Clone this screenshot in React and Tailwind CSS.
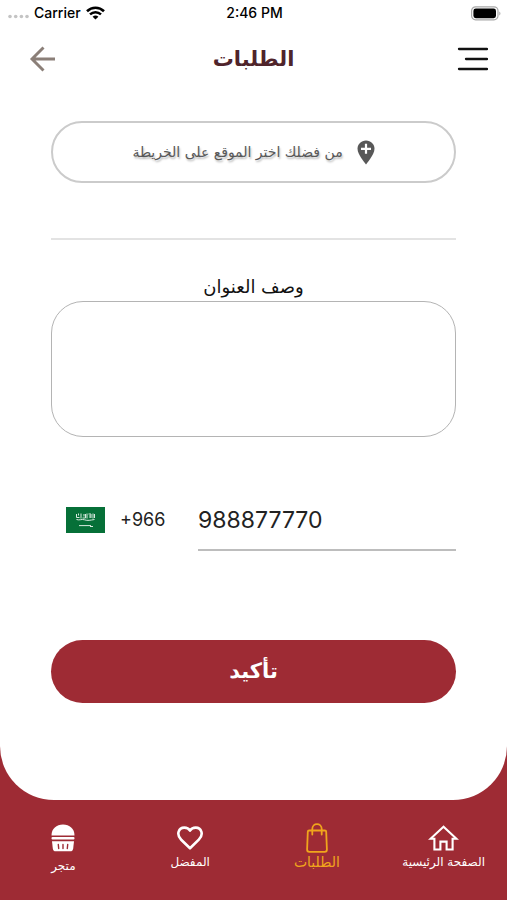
import React from "react";

function WifiIcon() {
  return (
    <svg width="19" height="14" viewBox="0 0 19 14" fill="none" stroke="#000" aria-hidden="true">
      <path d="M1 5.2C5.8 0.6 13.2 0.6 18 5.2" strokeWidth="2.6" />
      <path d="M4 8.4c3.2-3 7.8-3 11 0" strokeWidth="2.5" />
      <path d="M9.500 13.600L6.600 10.700c1.700-1.500 4.100-1.500 5.800 0z" fill="#000" stroke="none" />
    </svg>
  );
}

function StatusBar() {
  return (
    <div className="grid h-[26px] grid-cols-3 items-center pr-[6px] pl-2 font-['Inter','Liberation_Sans',sans-serif] text-sm font-medium text-black">
      <div className="flex items-center gap-[5px]">
        <svg width="21" height="14" viewBox="0 0 21 14" fill="#c4c4c4" aria-hidden="true">
          <circle cx="2" cy="10.500" r="1.800" />
          <circle cx="7.700" cy="10.500" r="1.800" />
          <circle cx="13.400" cy="10.500" r="1.800" />
          <circle cx="19" cy="10.500" r="1.800" />
        </svg>
        <span>Carrier</span>
        <WifiIcon />
      </div>
      <div className="text-center">2:46 PM</div>
      <svg className="justify-self-end" width="30" height="15" viewBox="0 0 30 15" aria-hidden="true">
        <rect x="0.600" y="0.800" width="26.400" height="13" rx="4" fill="#fff" stroke="#a8a8a8" strokeWidth="1.200" />
        <rect x="2.400" y="2.600" width="22.600" height="9.600" rx="2.400" fill="#000" />
        <path d="M28.300 5.500c1.500.8 1.500 3.200 0 4z" fill="#a8a8a8" />
      </svg>
    </div>
  );
}

function Header() {
  return (
    <header className="flex h-[66px] items-center justify-between px-[19px]">
      <button type="button" aria-label="رجوع" className="flex w-10 justify-start pl-[10px]">
        <svg width="27" height="26" viewBox="0 0 27 26" fill="none" stroke="#8b7f78" strokeWidth="2.900" aria-hidden="true">
          <path d="M26 13H3.500M14.500 1.500L3 13l11.500 11.500" />
        </svg>
      </button>
      <h1 className="text-[21px] leading-8 font-bold text-[#4f242b]">الطلبات</h1>
      <button type="button" aria-label="القائمة" className="flex w-10 justify-end">
        <svg width="31" height="24" viewBox="0 0 31 24" fill="none" stroke="#111" strokeWidth="2.300" strokeLinecap="round" aria-hidden="true">
          <path d="M2 2h28M9 12h21M2 22h28" />
        </svg>
      </button>
    </header>
  );
}

function PinIcon() {
  return (
    <svg width="18" height="25" viewBox="0 0 18 25" aria-hidden="true">
      <path d="M9 .5C4.200.5.500 4.200.500 8.800.500 14.800 9 24.500 9 24.500s8.500-9.700 8.500-15.700C17.500 4.200 13.800.5 9 .5z" fill="#585858" />
      <path d="M9 3.800v10M4 8.800h10" stroke="#fff" strokeWidth="2.200" />
    </svg>
  );
}

function SaudiFlag() {
  return (
    <svg width="39" height="26" viewBox="0 0 39 26" role="img" aria-label="السعودية">
      <rect width="39" height="26" fill="#067038" />
      <g fill="none" stroke="#d9eadf" strokeWidth="1">
        <path d="M10.500 7v3.500h3M12.500 6.500v2M15 6.500v5M16.500 11h3V7M18 7v2.500M21 6.500v5M22.500 7h2.500v4M24 8v3M27 6.500v5M28.500 7v4" />
        <path d="M10.500 12.500c3 1.200 5-.8 8 .3s6 .4 10-.3" />
        <path d="M13 18.600h12M24 19.500h3" />
      </g>
    </svg>
  );
}

function StoreIcon() {
  return (
    <svg width="24" height="36" viewBox="0 -2 24 36" fill="#fff" aria-hidden="true">
      <path d="M.5 11.500C.5 4.500 5.500.5 12 .5s11.500 4 11.500 11z" />
      <rect x=".5" y="13" width="23" height="2.500" rx="1" />
      <path d="M1 17.300h22l-.8 7.200c-.3 2-1.300 2.800-3 2.800H4.800c-1.700 0-2.700-.8-3-2.800z" />
      <path d="M7.300 20.500l.4 4M12 20.500v4M16.700 20.500l-.4 4" stroke="#9e2b34" strokeWidth="1.400" strokeLinecap="round" />
    </svg>
  );
}

function HeartIcon() {
  return (
    <svg width="26" height="24" viewBox="0 0 26 24" fill="none" stroke="#fff" strokeWidth="2.600" strokeLinejoin="round" aria-hidden="true">
      <path d="M13 22.300L4.200 13.700C-1.200 8.200 1.800 1.600 7.300 1.600c2.600 0 4.600 1.200 5.700 3 1.100-1.800 3.100-3 5.700-3 5.500 0 8.500 6.600 3.100 12.100z" />
    </svg>
  );
}

function BagIcon() {
  return (
    <svg width="22" height="30" viewBox="0 0 22 30" fill="none" stroke="currentColor" strokeWidth="1.800" strokeLinecap="round" aria-hidden="true">
      <path d="M3.200 7.500h15.600c1 0 1.400.5 1.400 1.300l.7 17.700c0 1.500-.8 2.300-2.200 2.300H3.300c-1.400 0-2.200-.8-2.200-2.300l.7-17.700c0-.8.4-1.300 1.400-1.300z" />
      <path d="M6.300 11.500V6c0-6.600 9.400-6.600 9.400 0v5.500" />
    </svg>
  );
}

function HomeIcon() {
  return (
    <svg width="31" height="26" viewBox="0 0 31 26" fill="none" stroke="#fff" strokeWidth="2.100" aria-hidden="true">
      <path d="M15.500 1.700L2.500 13.800h3.900v10.700h6v-7.900h6.200v7.900h6V13.800h3.900z" />
    </svg>
  );
}

const tabs = [
  { label: "متجر", icon: <StoreIcon />, active: false },
  { label: "المفضل", icon: <HeartIcon />, active: false },
  { label: "الطلبات", icon: <BagIcon />, active: true },
  { label: "الصفحة الرئيسية", icon: <HomeIcon />, active: false },
];

function TabBar() {
  return (
    <nav className="grid h-[100px] grid-cols-4 pt-[22px]">
      {tabs.map((tab) => (
        <a
          key={tab.label}
          href="#"
          aria-current={tab.active ? "page" : undefined}
          className={
            tab.active
              ? "flex flex-col items-center text-sm text-[#f0a51c]"
              : "flex flex-col items-center text-xs text-white"
          }
        >
          <span className="flex min-h-8 items-center">{tab.icon}</span>
          <span dir="rtl" className="leading-4 whitespace-nowrap">{tab.label}</span>
        </a>
      ))}
    </nav>
  );
}

export default function App() {
  return (
    <div className="flex min-h-screen flex-col bg-[#9e2b34] font-['DejaVu_Sans',sans-serif]">
      <main className="flex-1 rounded-b-[54px] bg-white">
        <StatusBar />
        <Header />
        <form className="flex flex-col px-[51px] pt-[29px]" onSubmit={(e) => e.preventDefault()}>
          <button
            type="button"
            dir="rtl"
            className="flex h-[62px] items-center justify-center gap-[14px] rounded-full border-2 border-[#cbcbcb] text-sm text-[#585858] text-shadow-[1px_2px_2px_#bbbbbb]"
          >
            <PinIcon />
            <span>من فضلك اختر الموقع على الخريطة</span>
          </button>
          <hr className="mt-[55px] border-t-2 border-[#e3e3e3]" />
          <label htmlFor="address" dir="rtl" className="mt-[33px] text-center text-lg leading-7 text-[#111111]">
            وصف العنوان
          </label>
          <textarea
            id="address"
            dir="rtl"
            className="h-[136px] resize-none rounded-[32px] border border-[#b4b4b4] p-5 outline-none"
          />
          <div className="mt-[53px] flex font-['Inter','Liberation_Sans',sans-serif] text-[#222222]">
            <div className="flex h-[60px] w-[147px] items-center gap-[15px] pl-[15px]">
              <SaudiFlag />
              <span className="text-lg">+966</span>
            </div>
            <input
              type="tel"
              aria-label="رقم الجوال"
              defaultValue="988877770"
              className="h-[61px] min-w-0 flex-1 border-b-2 border-[#bdbdbd] text-[23px] outline-none"
            />
          </div>
          <button type="submit" className="mt-[89px] h-[63px] rounded-full bg-[#9e2b34] text-[21px] font-bold text-white">
            تأكيد
          </button>
        </form>
      </main>
      <TabBar />
    </div>
  );
}
